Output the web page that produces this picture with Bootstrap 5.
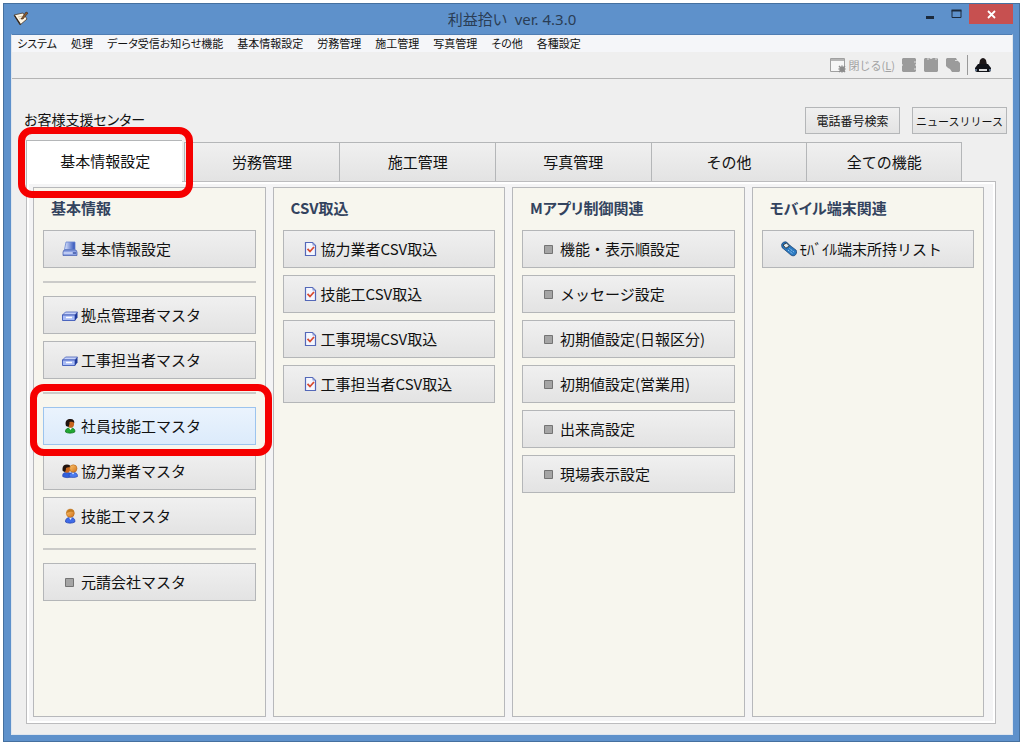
<!DOCTYPE html>
<html lang="ja">
<head>
<meta charset="utf-8">
<meta name="viewport" content="width=device-width, initial-scale=1">
<title>利益拾い ver. 4.3.0</title>
<link href="https://cdn.jsdelivr.net/npm/bootstrap@5.3.0/dist/css/bootstrap.min.css" rel="stylesheet">
<style>
  body { font-family: "Noto Sans CJK JP", sans-serif; font-feature-settings: "palt"; font-size: 12px; line-height: 18px; color: #111; background: #fff; padding: 3px 4px 4px 3px; }
  button { color: inherit; }
  .app-window { min-height: calc(100vh - 7px); background: #5e91cb; border: 1px solid #45709f; padding: 0 6px 6px 7px; }
  .title-bar { height: 30px; }
  .title-text { font-family: "Noto Sans", "Noto Sans CJK JP", sans-serif; font-size: 15px; line-height: 30px; color: #2a3d55; white-space: pre; }
  .title-icon { left: 2px; top: 6px; }
  .title-tools { right: 0; top: 0; }
  .title-tools button { border: 0; background: none; height: 20px; padding: 0; width: 26px; }
  .title-tools .close-win { width: 44px; background: #c75050; }
  .client { background: #efefef; border: 1px solid #dfe6ee; border-top-color: #4f7db3; }
  .menu-strip { background: #f5f6f9; height: 17px; padding-left: 5px; gap: 14px; font-size: 11px; line-height: 16px; }
  .menu-strip a { color: #111; text-decoration: none; white-space: nowrap; }
  .tool-strip { height: 27px; border-bottom: 1px solid #b4b4b4; padding-right: 20px; gap: 6px; }
  .tool-strip button { border: 0; background: none; padding: 0; line-height: 18px; }
  .tool-strip .dim { color: #a2a2a2; font-size: 11px; gap: 3px; }
  .tool-sep { width: 1px; height: 20px; background: #999; }
  .support { height: 63px; padding: 0 5px 8px 12px; }
  .support h1 { font-size: 14px; line-height: 20px; font-weight: 400; margin: 0 0 5px; }
  .face { background: linear-gradient(#f0f0f0, #e3e3e3); border: 1px solid #b4b6b8; border-radius: 0; }
  .face:hover { background: #e3effb; border-color: #a5c9ec; }
  .btn-top { width: 95px; height: 27px; font-size: 12px; line-height: 18px; padding: 0; color: #111; white-space: nowrap; }
  .btn-top-kana { font-size: 11px; }
  .tab-row { margin: 0 50px 0 16px; height: 39px; }
  .tab-row button { font-size: 15px; line-height: 24px; border-bottom: 0; border-right: 0; padding: 0; }
  .tab-row li:last-child button { border-right: 1px solid #b4b6b8; }
  .tab-row .picked { background: #fff; margin: -2px 0 -2px -2px; height: 44px; padding: 0 0 4px 2px; }
  .tab-row li:first-child { z-index: 2; }
  .pane { background: #f4f4f5; border: 1px solid #bcbcbe; box-shadow: inset 0 0 0 2px #fff; margin: 0 16px 10px 14px; padding: 5px 11px 6px 6px; gap: 7px; }
  .func-col { background: #f7f6ee; border: 1px solid #b7b8bb; flex: 1 1 0; min-width: 0; padding: 9px 9px 10px; }
  .func-col h2 { font-size: 15px; line-height: 22px; font-weight: 700; color: #33435e; margin: 0 0 11px; padding-left: 8px; }
  .func-list { gap: 7px; font-feature-settings: normal; }
  .func-list button { height: 38px; font-size: 15px; line-height: 24px; color: #111; padding: 0 4px 1px 18px; gap: 3px; white-space: nowrap; }
  .func-list svg { width: 16px; height: 16px; flex: none; }
  .func-list hr { margin: 6px 0; border-top: 2px solid #cbcbc9; opacity: 1; }
  .func-list .hot { background: linear-gradient(#eaf3fd, #dcebfb); border-color: #9cc4ee; }
  .ring { border: 7px solid #f60000; border-radius: 14px; pointer-events: none; z-index: 3; }
  .ring-tab { inset: -15px -9px -17px -10px; }
  .ring-item { inset: -23px -16px -11px -13px; }
</style>
</head>
<body>
<svg width="0" height="0" class="position-absolute" aria-hidden="true">
  <defs>
    <linearGradient id="blue" x2="1" y2="0"><stop offset="0" stop-color="#dfe8ff"/><stop offset="1" stop-color="#2f50b8"/></linearGradient>
    <linearGradient id="skin" x2="1" y2="1"><stop offset="0" stop-color="#ffc870"/><stop offset="1" stop-color="#d0711a"/></linearGradient>
    <symbol id="i-pc" viewBox="0 0 16 16"><path d="M4 1h9v7.500H2.500z" fill="url(#blue)" stroke="#6a86d2" stroke-width=".8"/><path d="M2 9h12l1 2v3.500H1V11z" fill="#8ea3e4" stroke="#4059ac" stroke-width=".7"/><path d="M1.500 12h9" stroke="#eef2ff"/><path d="M11 12h3" stroke="#203a8c"/></symbol>
    <symbol id="i-case" viewBox="0 0 16 16"><path d="M3.500 5H15.500L13 8H.5z" fill="#c6d2fa" stroke="#4a62b8" stroke-width=".8"/><path d="M.5 8H13v5.500H.5z" fill="#a9bcf5" stroke="#3c58b8" stroke-width=".9"/><path d="M13 8l2.500-3v5.500L13 13.500z" fill="#1f3a9a"/><path d="M4 10.500h6" stroke="#fff" stroke-width="1.500"/></symbol>
    <symbol id="i-green" viewBox="0 0 16 16"><path d="M3.500 14c-.3-3 1.500-4 4.800-4s5 1.200 4.500 4c-2 1.500-7.500 1.500-9.300 0z" fill="#20a832" stroke="#0b6c18" stroke-width=".7"/><path d="M7 10l1.500 2 1.500-2z" fill="#fff"/><ellipse cx="8.800" cy="5.800" rx="3.300" ry="4" fill="#c8651d"/><path d="M4 8C2.500 3 5 .8 8.500 1c3 0 4 1.800 3.800 4C11 3.500 9 3.500 7.500 4c.3 2-.5 3.500-1 5z" fill="#20130e"/></symbol>
    <symbol id="i-man" viewBox="0 0 16 16"><path d="M3.500 14c-.3-3 1.500-4.500 4.800-4.500s5 1.500 4.500 4.500c-2 1.500-7.500 1.500-9.300 0z" fill="#3e6be8" stroke="#1e3caa" stroke-width=".7"/><path d="M7 9.500L8.500 12l1.500-2.500z" fill="#e6efff"/><circle cx="8.300" cy="5.200" r="4" fill="url(#skin)" stroke="#b66617" stroke-width=".6"/><path d="M4.500 5C5 2 7 .8 9 1.200c2 .2 3 1.500 3.300 3-2-.8-4-.8-7.800.8z" fill="#c27a20"/></symbol>
    <symbol id="i-men" viewBox="0 0 16 16"><path d="M.7 13.500C.4 10 2 9.500 5 9.500s5 1 5 4c-2 1.500-7.500 1.500-9.300 0z" fill="#315fda" stroke="#1e3caa" stroke-width=".6"/><ellipse cx="5" cy="6" rx="3.200" ry="3.700" fill="#c8651d"/><path d="M.7 8C-.2 3.500 1.800 1.500 5 1.500S8.500 3 8 4.500C6 4 5 4.500 4 5c0 2-.5 3-1 4z" fill="#20130e"/><path d="M7 13.500c0-3 1.500-4 4.200-4s4.500 1 4.300 4c-2 1.300-6.500 1.300-8.500 0z" fill="#4b7bf0" stroke="#1e3caa" stroke-width=".6"/><path d="M10 9.700l1 1.800 1.200-1.800z" fill="#fff"/><circle cx="11.300" cy="5.500" r="3.700" fill="url(#skin)" stroke="#b66617" stroke-width=".6"/></symbol>
    <symbol id="i-box" viewBox="0 0 16 16"><path d="M3.500 4.500h8v8h-8z" fill="#a5a5a5" stroke="#747474"/></symbol>
    <symbol id="i-doc" viewBox="0 0 16 16"><path d="M3.500 1.500h7l3 3v10h-10z" fill="#f4f7ff" stroke="#5468b8" stroke-width="1.200"/><path d="M10.500 1.500v3h3z" fill="#8a9ad6"/><path d="M5.500 7.800L8 10.500l4-4.500" fill="none" stroke="#d84a30" stroke-width="1.800"/></symbol>
    <symbol id="i-phone" viewBox="0 0 16 16"><path d="M.6 3.800C1 1.500 3.500.4 5.500 1L9 4.500l6.200 4.700c1 1.500.2 4.800-2 5.500-1.500.4-3-.2-4.200-1.400L1 6.500z" fill="#2a78c0" stroke="#103a6c" stroke-width=".7"/><path d="M2 4l3.500-2 3 3-3.700 2.200z" fill="#e4edf0" stroke="#222" stroke-width=".8"/><path d="M8.500 7.500l5 4M7 9l5 4" stroke="#9fd0f5" stroke-width="1" stroke-dasharray="1.300 .8"/></symbol>
  </defs>
</svg>

<div class="app-window d-flex flex-column">
  <header class="title-bar position-relative text-center">
    <svg class="title-icon position-absolute" width="17" height="17" viewBox="0 0 17 17" aria-hidden="true"><path d="M1 5l9-2 4 6-7 6z" fill="#fff6e4" stroke="#4b3928" stroke-width=".8"/><path d="M1.500 5.500l6 9" stroke="#2c2018" stroke-width="1.300"/><path d="M5 7l5-1M6 9l5-1" stroke="#d8c8ac"/><path d="M8 9l5-7 2 1-5 6z" fill="#8c5a2c" stroke="#3a2618" stroke-width=".6"/></svg>
    <div class="title-text">利益拾い  ver. 4.3.0</div>
    <div class="title-tools position-absolute d-flex">
      <button type="button" aria-label="最小化"><svg class="d-block mx-auto" width="10" height="12" viewBox="0 0 10 12"><path d="M1 8h8v3H1z" fill="#1c2a3c"/></svg></button>
      <button type="button" aria-label="最大化"><svg class="d-block mx-auto" width="11" height="10" viewBox="0 0 11 10"><path d="M1 1.500h9v7H1z" fill="none" stroke="#1c2a3c"/><path d="M.5 1.500h10" stroke="#1c2a3c" stroke-width="2"/></svg></button>
      <button type="button" class="close-win" aria-label="閉じる"><svg class="d-block mx-auto" width="9" height="9" viewBox="0 0 9 9"><path d="M1 1l7 7M8 1L1 8" stroke="#fff" stroke-width="1.800"/></svg></button>
    </div>
  </header>

  <main class="client d-flex flex-column flex-grow-1">
    <nav class="menu-strip d-flex">
      <a href="#">システム</a><a href="#">処理</a><a href="#">データ受信お知らせ機能</a><a href="#">基本情報設定</a><a href="#">労務管理</a><a href="#">施工管理</a><a href="#">写真管理</a><a href="#">その他</a><a href="#">各種設定</a>
    </nav>
    <div class="tool-strip d-flex align-items-center justify-content-end">
      <button type="button" class="dim d-flex align-items-center"><svg width="16" height="16" viewBox="0 0 16 16"><path d="M.5 1.500h14v13H.5z" fill="#f6f6f6" stroke="#a0a0a0"/><path d="M1 3h13" stroke="#b5b5b5" stroke-width="2"/><path d="M9 9l6 6M15 9l-6 6M12 8.500v7M8.500 12h7" stroke="#8c8c8c" stroke-width="1.500"/></svg><span>閉じる(<u>L</u>)</span></button>
      <button type="button" aria-label="並べて表示"><svg class="d-block" width="16" height="16" viewBox="0 0 16 16"><path d="M2 1h12l1 1v5l-1 1 1 1v5l-1 1H2l-1-1V9l1-1-1-1V2z" fill="#9b9b9b"/><path d="M13 5h2M13 12h2" stroke="#ddd"/></svg></button>
      <button type="button" aria-label="左右に表示"><svg class="d-block" width="16" height="16" viewBox="0 0 16 16"><path d="M1 2l1-1h4l2 1 2-1h4l1 1v12l-1 1H2l-1-1z" fill="#9b9b9b"/><path d="M5 1v2M13 1v2" stroke="#ddd"/></svg></button>
      <button type="button" aria-label="重ねて表示"><svg class="d-block" width="16" height="16" viewBox="0 0 16 16"><path d="M2 1h9l1 2 2 2 1 1v8l-1 1H7l-2-3-2-1-2-2V2z" fill="#9b9b9b"/><path d="M10 3.500h3" stroke="#ddd"/></svg></button>
      <div class="tool-sep"></div>
      <button type="button" aria-label="印刷"><svg class="d-block" width="18" height="16" viewBox="0 0 18 16"><path d="M5 8l1-5q3-4 6 0l1 5z" fill="#1d1718"/><path d="M4 7h10l3 4v3l-2 1H3l-2-1v-3z" fill="#111319"/><path d="M5 12h8v2H5z" fill="#dcdcdc"/><path d="M1 13h2M15 13h2" stroke="#5b6e88" stroke-width="2"/></svg></button>
    </div>

    <div class="support d-flex align-items-end">
      <h1 class="me-auto">お客様支援センター</h1>
      <div class="d-flex gap-2">
        <button type="button" class="btn face btn-top me-1">電話番号検索</button>
        <button type="button" class="btn face btn-top btn-top-kana">ニュースリリース</button>
      </div>
    </div>

    <ul class="tab-row nav nav-fill flex-nowrap" role="tablist">
      <li class="position-relative w-100" role="presentation"><button type="button" class="face picked w-100" role="tab" aria-selected="true">基本情報設定</button><span class="ring ring-tab position-absolute"></span></li>
      <li class="w-100" role="presentation"><button type="button" class="face w-100 h-100" role="tab">労務管理</button></li>
      <li class="w-100" role="presentation"><button type="button" class="face w-100 h-100" role="tab">施工管理</button></li>
      <li class="w-100" role="presentation"><button type="button" class="face w-100 h-100" role="tab">写真管理</button></li>
      <li class="w-100" role="presentation"><button type="button" class="face w-100 h-100" role="tab">その他</button></li>
      <li class="w-100" role="presentation"><button type="button" class="face w-100 h-100" role="tab">全ての機能</button></li>
    </ul>

    <div class="pane d-flex flex-grow-1">
      <section class="func-col">
        <h2>基本情報</h2>
        <div class="func-list d-flex flex-column">
          <button type="button" class="face d-flex align-items-center"><svg aria-hidden="true"><use href="#i-pc"/></svg>基本情報設定</button>
          <hr>
          <button type="button" class="face d-flex align-items-center"><svg aria-hidden="true"><use href="#i-case"/></svg>拠点管理者マスタ</button>
          <button type="button" class="face d-flex align-items-center"><svg aria-hidden="true"><use href="#i-case"/></svg>工事担当者マスタ</button>
          <hr>
          <div class="position-relative">
            <button type="button" class="face hot d-flex align-items-center w-100"><svg aria-hidden="true"><use href="#i-green"/></svg>社員技能工マスタ</button>
            <span class="ring ring-item position-absolute"></span>
          </div>
          <button type="button" class="face d-flex align-items-center"><svg aria-hidden="true"><use href="#i-men"/></svg>協力業者マスタ</button>
          <button type="button" class="face d-flex align-items-center"><svg aria-hidden="true"><use href="#i-man"/></svg>技能工マスタ</button>
          <hr>
          <button type="button" class="face d-flex align-items-center"><svg aria-hidden="true"><use href="#i-box"/></svg>元請会社マスタ</button>
        </div>
      </section>
      <section class="func-col">
        <h2>CSV取込</h2>
        <div class="func-list d-flex flex-column">
          <button type="button" class="face d-flex align-items-center"><svg aria-hidden="true"><use href="#i-doc"/></svg>協力業者CSV取込</button>
          <button type="button" class="face d-flex align-items-center"><svg aria-hidden="true"><use href="#i-doc"/></svg>技能工CSV取込</button>
          <button type="button" class="face d-flex align-items-center"><svg aria-hidden="true"><use href="#i-doc"/></svg>工事現場CSV取込</button>
          <button type="button" class="face d-flex align-items-center"><svg aria-hidden="true"><use href="#i-doc"/></svg>工事担当者CSV取込</button>
        </div>
      </section>
      <section class="func-col">
        <h2>Mアプリ制御関連</h2>
        <div class="func-list d-flex flex-column">
          <button type="button" class="face d-flex align-items-center"><svg aria-hidden="true"><use href="#i-box"/></svg>機能・表示順設定</button>
          <button type="button" class="face d-flex align-items-center"><svg aria-hidden="true"><use href="#i-box"/></svg>メッセージ設定</button>
          <button type="button" class="face d-flex align-items-center"><svg aria-hidden="true"><use href="#i-box"/></svg>初期値設定(日報区分)</button>
          <button type="button" class="face d-flex align-items-center"><svg aria-hidden="true"><use href="#i-box"/></svg>初期値設定(営業用)</button>
          <button type="button" class="face d-flex align-items-center"><svg aria-hidden="true"><use href="#i-box"/></svg>出来高設定</button>
          <button type="button" class="face d-flex align-items-center"><svg aria-hidden="true"><use href="#i-box"/></svg>現場表示設定</button>
        </div>
      </section>
      <section class="func-col">
        <h2>モバイル端末関連</h2>
        <div class="func-list d-flex flex-column">
          <button type="button" class="face d-flex align-items-center"><svg aria-hidden="true"><use href="#i-phone"/></svg>ﾓﾊﾞｲﾙ端末所持リスト</button>
        </div>
      </section>
    </div>
  </main>
</div>
<script src="https://cdn.jsdelivr.net/npm/bootstrap@5.3.0/dist/js/bootstrap.bundle.min.js"></script>
</body>
</html>
